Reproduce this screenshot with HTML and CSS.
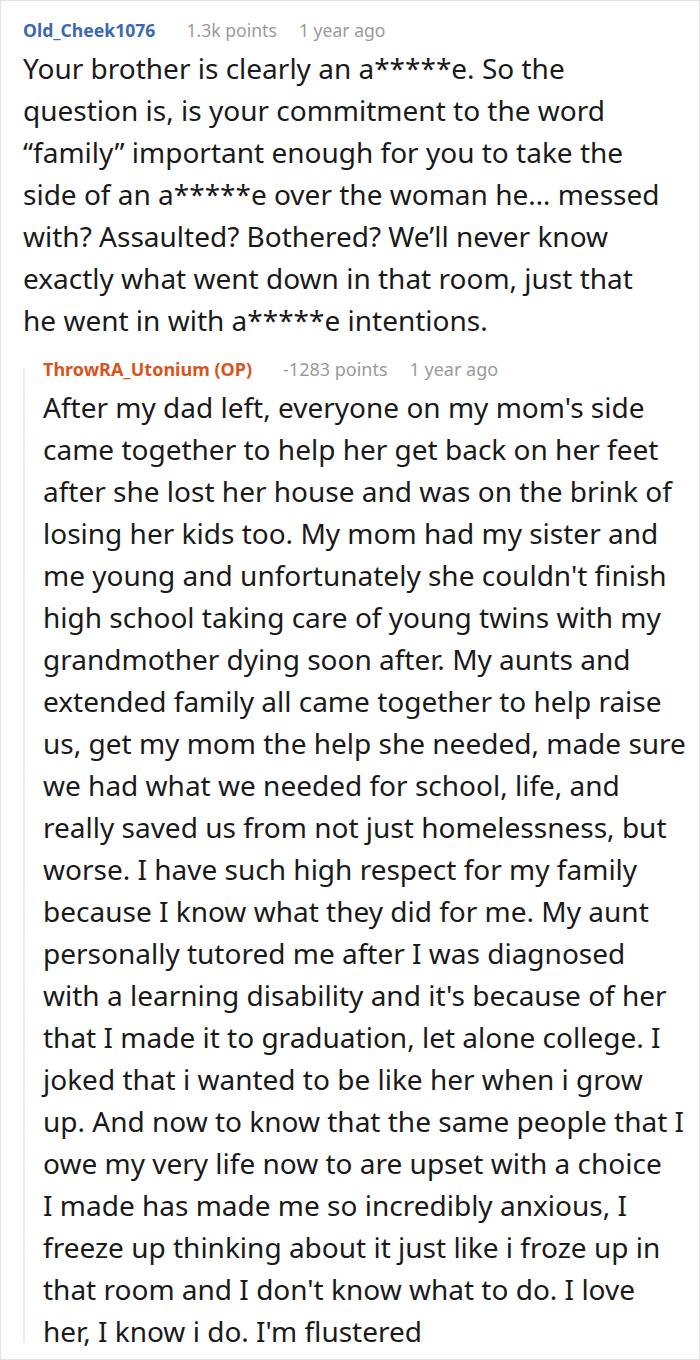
FILE: index.html
```html
<!DOCTYPE html>
<html>
<head>
<meta charset="utf-8">
<link rel="stylesheet" href="styles.css">
</head>
<body>
<div class="card">
  <div class="comment">
    <div class="meta">
      <span class="user">Old_Cheek1076</span>
      <span class="info">1.3k points</span>
      <span class="info">1 year ago</span>
    </div>
    <p class="body">Your brother is clearly an a*****e. So the<br>question is, is your commitment to the word<br>“family” important enough for you to take the<br>side of an a*****e over the woman he… messed<br>with? Assaulted? Bothered? We’ll never know<br>exactly what went down in that room, just that<br>he went in with a*****e intentions.</p>
  </div>
  <div class="reply">
    <div class="meta">
      <span class="user op">ThrowRA_Utonium (OP)</span>
      <span class="info">-1283 points</span>
      <span class="info">1 year ago</span>
    </div>
    <p class="body">After my dad left, everyone on my mom's side<br>came together to help her get back on her feet<br>after she lost her house and was on the brink of<br>losing her kids too. My mom had my sister and<br>me young and unfortunately she couldn't finish<br>high school taking care of young twins with my<br>grandmother dying soon after. My aunts and<br>extended family all came together to help raise<br>us, get my mom the help she needed, made sure<br>we had what we needed for school, life, and<br>really saved us from not just homelessness, but<br>worse. I have such high respect for my family<br>because I know what they did for me. My aunt<br>personally tutored me after I was diagnosed<br>with a learning disability and it's because of her<br>that I made it to graduation, let alone college. I<br>joked that i wanted to be like her when i grow<br>up. And now to know that the same people that I<br>owe my very life now to are upset with a choice<br>I made has made me so incredibly anxious, I<br>freeze up thinking about it just like i froze up in<br>that room and I don't know what to do. I love<br>her, I know i do. I'm flustered</p>
  </div>
</div>
</body>
</html>
```
FILE: styles.css
```css
html, body {
  margin: 0;
  padding: 0;
  background: #ffffff;
}
.card {
  box-sizing: border-box;
  width: 700px;
  height: 1360px;
  border: 1px solid #e2e2e2;
  padding: 17px 0 0 22px;
  font-family: "Noto Sans", "Open Sans", sans-serif;
  color: #1a1a1a;
  overflow: hidden;
}
.meta {
  display: flex;
  gap: 22px;
  font-size: 18px;
  line-height: 24px;
  white-space: nowrap;
}
.comment .meta {
  font-size: 17.6px;
}
.user {
  font-weight: 700;
  color: #3b6ab4;
  margin-right: 9px;
}
.user.op {
  color: #d9541e;
}
.info {
  color: #9a9a9a;
}
.body {
  margin: 5px 0 0 0;
  font-size: 28px;
  line-height: 42px;
  white-space: nowrap;
}
.reply {
  position: relative;
  margin-top: 16px;
  padding-left: 20px;
}
.reply::before {
  content: "";
  position: absolute;
  left: 0;
  top: 11px;
  bottom: 10px;
  width: 2px;
  background: #ebebeb;
}
```
